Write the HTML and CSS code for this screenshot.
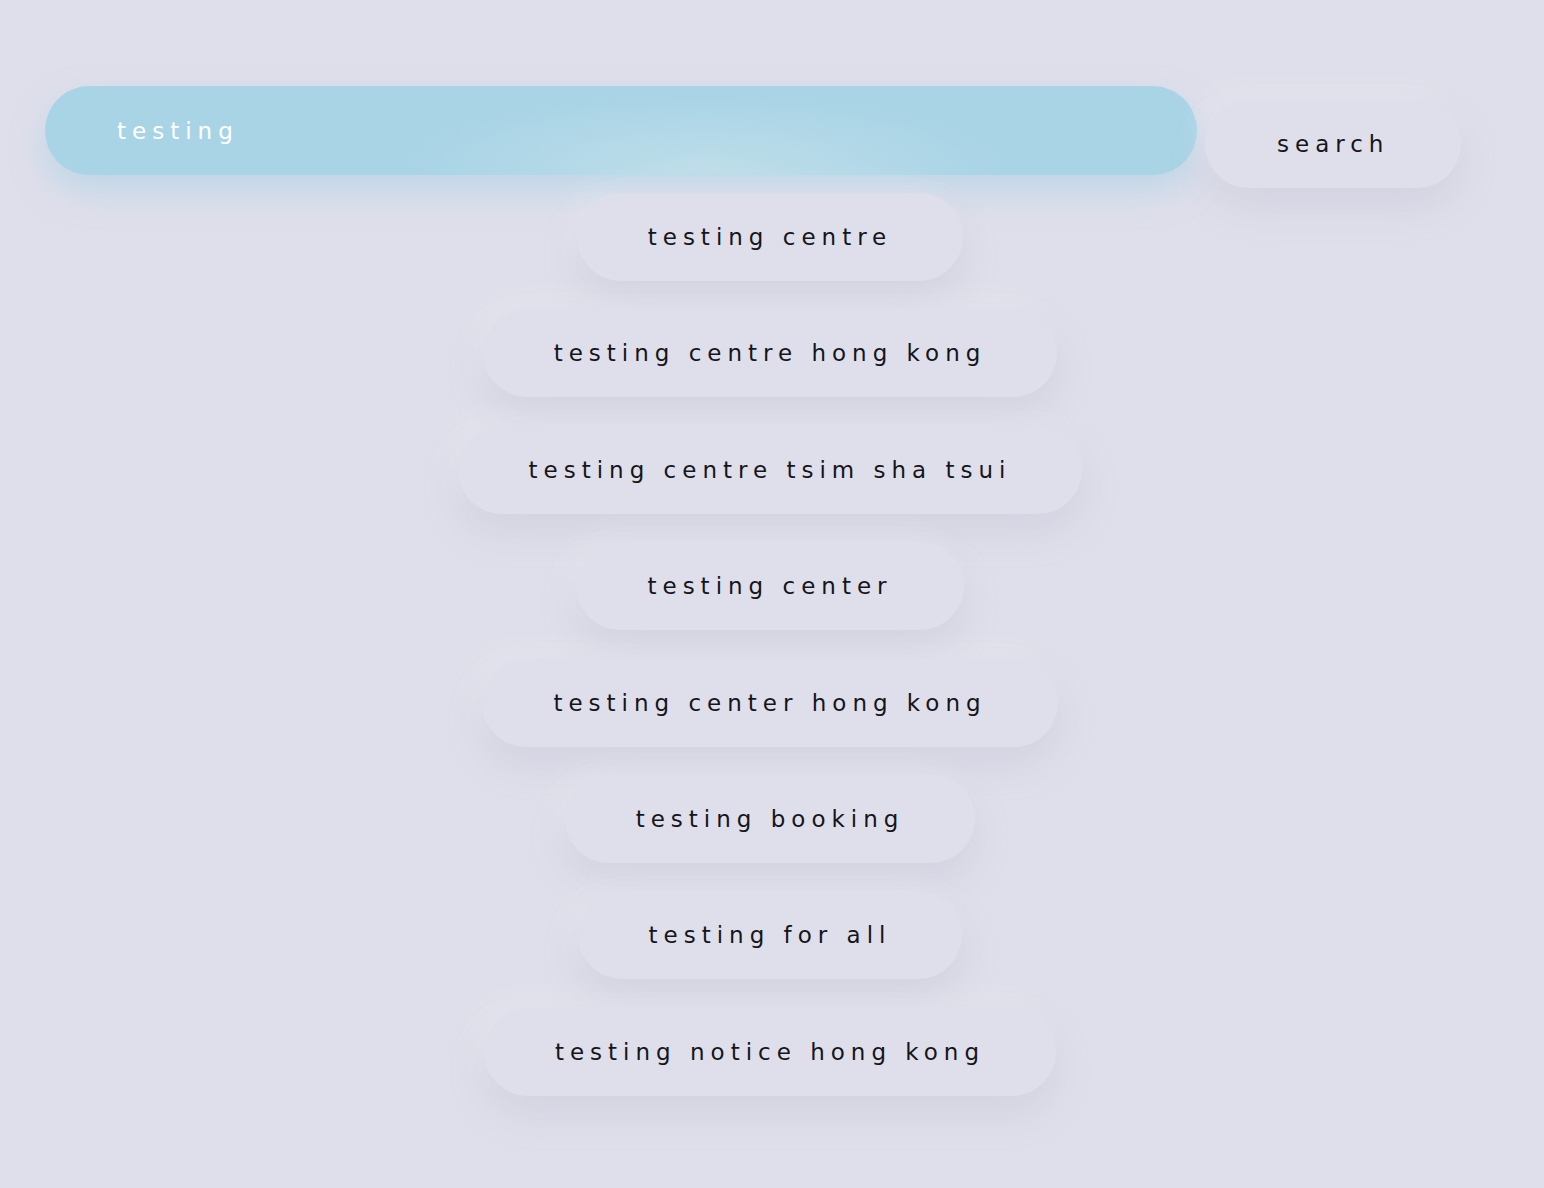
FILE: index.html
```html
<!DOCTYPE html>
<html lang="en">
<head>
<meta charset="utf-8">
<title>search</title>
<link rel="stylesheet" href="styles.css">
</head>
<body>
<main class="page">
  <div class="search-row">
    <div class="search-input">testing</div>
    <button class="search-btn" type="button">search</button>
  </div>
  <ul class="suggestions">
    <li class="pill">testing centre</li>
    <li class="pill">testing centre hong kong</li>
    <li class="pill">testing centre tsim sha tsui</li>
    <li class="pill">testing center</li>
    <li class="pill">testing center hong kong</li>
    <li class="pill">testing booking</li>
    <li class="pill">testing for all</li>
    <li class="pill">testing notice hong kong</li>
  </ul>
</main>
</body>
</html>
```
FILE: styles.css
```css
html, body {
  margin: 0;
  padding: 0;
}
body {
  background: #dfdfeb;
  font-family: "DejaVu Sans", "Noto Sans", sans-serif;
  color: #15151a;
  min-height: 1188px;
  overflow: hidden;
}
.page {
  padding: 86px 0 0 45px;
  width: 1495px;
}
.search-row {
  display: flex;
  align-items: flex-start;
  gap: 8px;
}
.search-input {
  box-sizing: border-box;
  width: 1152px;
  height: 89px;
  border-radius: 45px;
  padding: 0 72px;
  display: flex;
  align-items: center;
  background: radial-gradient(ellipse 300px 70px at 660px 80px, #bddde9 0%, #a9d4e6 100%);
  background-color: #a9d4e6;
  color: #ffffff;
  font-size: 23px;
  letter-spacing: 6px;
  box-shadow: 0 16px 32px rgba(160, 208, 230, 0.5);
}
.search-btn {
  box-sizing: border-box;
  margin-top: 14px;
  height: 88px;
  border: none;
  border-radius: 44px;
  padding: 0 72px;
  background: #dfdfeb;
  font-family: inherit;
  font-size: 23px;
  letter-spacing: 6px;
  color: #15151a;
  box-shadow: 0 18px 36px rgba(170, 170, 190, 0.22), -10px -10px 28px rgba(255, 255, 255, 0.2);
}
.suggestions {
  list-style: none;
  margin: 5px 0 0 -45px;
  padding: 0;
  width: 1540px;
  display: flex;
  flex-direction: column;
  align-items: center;
  gap: 28.4px;
}
.pill {
  box-sizing: border-box;
  height: 88px;
  border-radius: 44px;
  padding: 0 71px;
  display: flex;
  align-items: center;
  background: #dfdfeb;
  font-size: 23px;
  letter-spacing: 6px;
  white-space: nowrap;
  box-shadow: 0 18px 36px rgba(170, 170, 190, 0.22), -10px -10px 28px rgba(255, 255, 255, 0.2);
}
```
